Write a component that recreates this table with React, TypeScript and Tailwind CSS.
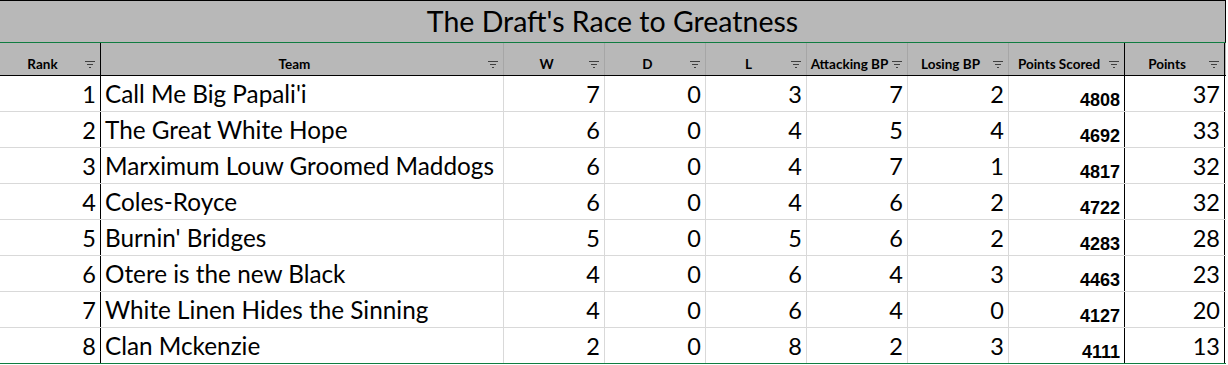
import React from "react";

type Row = {
  rank: number;
  team: string;
  w: number;
  d: number;
  l: number;
  att: number;
  los: number;
  scored: number;
  points: number;
};

const rows: Row[] = [
  { rank: 1, team: "Call Me Big Papali'i", w: 7, d: 0, l: 3, att: 7, los: 2, scored: 4808, points: 37 },
  { rank: 2, team: "The Great White Hope", w: 6, d: 0, l: 4, att: 5, los: 4, scored: 4692, points: 33 },
  { rank: 3, team: "Marximum Louw Groomed Maddogs", w: 6, d: 0, l: 4, att: 7, los: 1, scored: 4817, points: 32 },
  { rank: 4, team: "Coles-Royce", w: 6, d: 0, l: 4, att: 6, los: 2, scored: 4722, points: 32 },
  { rank: 5, team: "Burnin' Bridges", w: 5, d: 0, l: 5, att: 6, los: 2, scored: 4283, points: 28 },
  { rank: 6, team: "Otere is the new Black", w: 4, d: 0, l: 6, att: 4, los: 3, scored: 4463, points: 23 },
  { rank: 7, team: "White Linen Hides the Sinning", w: 4, d: 0, l: 6, att: 4, los: 0, scored: 4127, points: 20 },
  { rank: 8, team: "Clan Mckenzie", w: 2, d: 0, l: 8, att: 2, los: 3, scored: 4111, points: 13 },
];

const cols = "grid grid-cols-[101px_403px_101px_101px_101px_101px_101px_116px_100px]";

function FilterIcon() {
  return (
    <svg width="10" height="7" viewBox="0 0 10 7" className="shrink-0 mb-[3px]">
      <rect x="0" y="0" width="10" height="1" fill="#404040" />
      <rect x="2" y="3" width="6" height="1" fill="#404040" />
      <rect x="4" y="6" width="2" height="1" fill="#404040" />
    </svg>
  );
}

function HeadCell({ label, dark }: { label: string; dark?: boolean }) {
  return (
    <div
      className={`flex items-end pb-[4px] pr-[5px] border-r ${
        dark ? "border-black" : "border-[#a6a6a6]"
      }`}
    >
      <span className="flex-1 text-center whitespace-nowrap text-[13.5px] font-bold leading-none text-black">
        {label}
      </span>
      <FilterIcon />
    </div>
  );
}

function NumCell({ value, dark }: { value: number; dark?: boolean }) {
  return (
    <div
      className={`flex items-end justify-end pr-[4px] pb-[5px] border-r ${
        dark ? "border-black" : "border-[#d9d9d9]"
      }`}
    >
      <span className="text-[23.5px] leading-none">{value}</span>
    </div>
  );
}

export default function App() {
  return (
    <div className="w-[1226px] bg-white text-black font-['Lato',sans-serif]">
      {/* Title band */}
      <div className="h-[43px] bg-[#b8b8b8] border-t border-r border-black border-b border-b-[#107c41] flex items-center justify-center">
        <h1 className="text-[28.5px] leading-none text-black">The Draft's Race to Greatness</h1>
      </div>

      {/* Header row */}
      <div className={`${cols} h-[33px] bg-[#b8b8b8] border-b border-black`}>
        <HeadCell label="Rank" dark />
        <HeadCell label="Team" />
        <HeadCell label="W" />
        <HeadCell label="D" />
        <HeadCell label="L" />
        <HeadCell label="Attacking BP" />
        <HeadCell label="Losing BP" />
        <HeadCell label="Points Scored" dark />
        <HeadCell label="Points" dark />
      </div>

      {/* Data rows */}
      {rows.map((r, i) => (
        <div
          key={r.rank}
          className={`${cols} h-[36px] border-b ${
            i === rows.length - 1 ? "border-[#107c41]" : "border-[#d9d9d9]"
          }`}
        >
          <NumCell value={r.rank} dark />
          <div className="flex items-end pl-[4px] pb-[5px] border-r border-[#d9d9d9]">
            <span className="text-[24.3px] leading-none whitespace-nowrap">{r.team}</span>
          </div>
          <NumCell value={r.w} />
          <NumCell value={r.d} />
          <NumCell value={r.l} />
          <NumCell value={r.att} />
          <NumCell value={r.los} />
          <div className="flex items-end justify-end pr-[4px] pb-[2px] border-r border-black">
            <span className="text-[18px] font-bold leading-none font-['Liberation_Sans',sans-serif]">
              {r.scored}
            </span>
          </div>
          <NumCell value={r.points} dark />
        </div>
      ))}
    </div>
  );
}
